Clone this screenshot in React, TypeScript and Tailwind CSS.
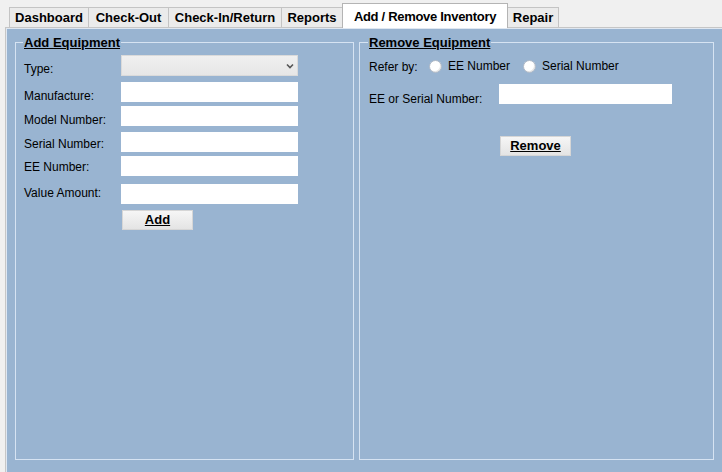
const tabs = [
  { label: 'Dashboard', w: 'w-[80px]' },
  { label: 'Check-Out', w: 'w-[81px]' },
  { label: 'Check-In/Return', w: 'w-[114px]' },
  { label: 'Reports', w: 'w-[62px]' },
];

const fields = [
  { label: 'Manufacture:', mt: 'mt-[6px]', lt: 'mt-[7px]' },
  { label: 'Model Number:', mt: 'mt-[4px]', lt: 'mt-[7px]' },
  { label: 'Serial Number:', mt: 'mt-[6px]', lt: 'mt-[5px]' },
  { label: 'EE Number:', mt: 'mt-[4px]', lt: 'mt-[4px]' },
  { label: 'Value Amount:', mt: 'mt-[8px]', lt: 'mt-[2px]' },
];

function Chevron() {
  return (
    <svg width="8" height="6" viewBox="0 0 8 6" className="mr-[3px]">
      <path d="M1 1.5 L4 4.5 L7 1.5" fill="none" stroke="#555" strokeWidth="1.6" />
    </svg>
  );
}

function WinButton({ label, className }: { label: string; className: string }) {
  return (
    <div
      className={`h-[20px] w-[71px] flex items-center justify-center bg-gradient-to-b from-[#f6f6f6] to-[#e4e4e4] border border-[#d6d6d6] text-[13px] font-bold underline text-black ${className}`}
    >
      {label}
    </div>
  );
}

function Radio({ label }: { label: string }) {
  return (
    <div className="flex items-center">
      <span className="w-[13px] h-[13px] rounded-full bg-white border border-[#aeb8c6] shadow-[inset_-1px_-1px_0_#e6e6e6]" />
      <span className="ml-[6px]">{label}</span>
    </div>
  );
}

export default function App() {
  return (
    <div className="w-[722px] h-[472px] bg-[#f0f0f0] flex flex-col overflow-hidden font-['Liberation_Sans',Arial,sans-serif] text-black">
      {/* tab strip */}
      <div className="h-[27px] flex items-end pl-[9px] shrink-0">
        {tabs.map((t) => (
          <div
            key={t.label}
            className={`${t.w} h-[20px] -ml-px first:ml-0 flex items-center justify-center bg-[#ebebeb] border border-b-0 border-[#c4c4c4] text-[13px] font-bold whitespace-nowrap`}
          >
            {t.label}
          </div>
        ))}
        <div className="relative z-10 w-[166px] h-[25px] -ml-px -mb-px flex items-start justify-center pt-[3px] bg-white border border-b-0 border-[#b4b4b4] text-[13px] tracking-[-0.3px] font-bold whitespace-nowrap">
          Add / Remove Inventory
        </div>
        <div className="w-[52px] h-[20px] -ml-px flex items-center justify-center bg-[#ebebeb] border border-b-0 border-[#c4c4c4] text-[13px] font-bold">
          Repair
        </div>
      </div>

      {/* tab page */}
      <div className="flex-1 ml-[5px] bg-[#99b4d1] border-l border-t border-[#c6c6c6] shadow-[inset_1px_1px_0_#dfe7f1] pl-[9px] pt-[14px] flex text-[12px]">
        {/* Add Equipment */}
        <div className="relative w-[339px] h-[418px] border border-[#d6e3f2]">
          <span className="absolute left-[7px] -top-[8px] px-[1px] bg-[#99b4d1] text-[13px] leading-[15px] font-bold underline">
            Add Equipment
          </span>
          <div className="pl-[8px] pt-[12px] flex flex-col">
            <div className="flex items-start">
              <span className="w-[97px] mt-[7px] leading-[14px]">Type:</span>
              <div className="w-[177px] h-[21px] flex items-center justify-end bg-gradient-to-b from-[#f0f0f0] to-[#e6e6e6] border border-[#dadada]">
                <Chevron />
              </div>
            </div>
            {fields.map((f) => (
              <div key={f.label} className={`flex items-start h-[20px] ${f.mt}`}>
                <span className={`w-[97px] leading-[14px] ${f.lt}`}>{f.label}</span>
                <div className="w-[177px] h-[20px] bg-white" />
              </div>
            ))}
            <WinButton label="Add" className="mt-[6px] ml-[98px]" />
          </div>
        </div>

        {/* Remove Equipment */}
        <div className="relative w-[355px] h-[418px] ml-[5px] border border-[#d6e3f2]">
          <span className="absolute left-[8px] -top-[8px] px-[1px] bg-[#99b4d1] text-[13px] leading-[15px] font-bold underline">
            Remove Equipment
          </span>
          <div className="pl-[9px] pt-[15px] flex flex-col">
            <div className="flex items-center h-[16px]">
              <span className="w-[60px] mt-[1px]">Refer by:</span>
              <Radio label="EE Number" />
              <div className="ml-[13px]">
                <Radio label="Serial Number" />
              </div>
            </div>
            <div className="flex items-start h-[20px] mt-[10px]">
              <span className="w-[130px] mt-[8px] leading-[14px]">EE or Serial Number:</span>
              <div className="w-[173px] h-[20px] bg-white" />
            </div>
            <WinButton label="Remove" className="mt-[32px] ml-[131px]" />
          </div>
        </div>
      </div>
    </div>
  );
}
